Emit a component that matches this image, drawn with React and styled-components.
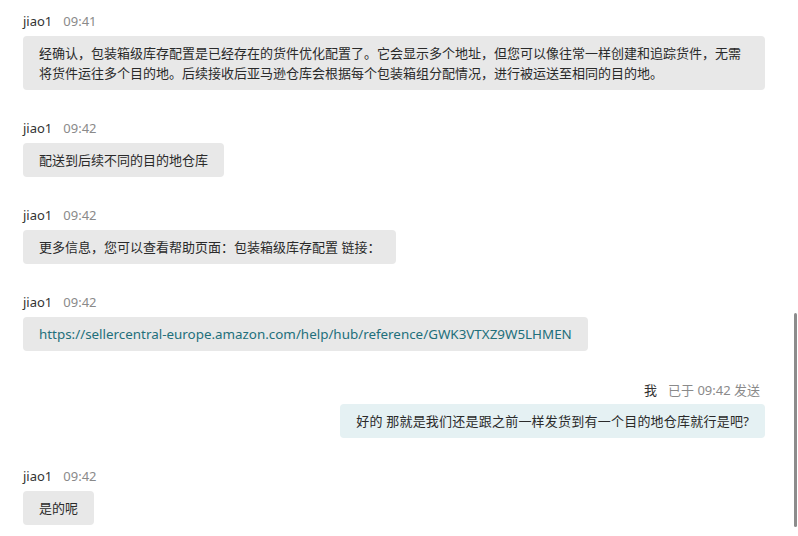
import React from "react";
import styled, { createGlobalStyle } from "styled-components";

const GlobalStyle = createGlobalStyle`
  html, body {
    margin: 0;
    padding: 0;
    background: #fff;
  }
  body {
    font-family: "Noto Sans", "Noto Sans CJK SC", sans-serif;
    color: #222;
  }
`;

const messages = [
  {
    from: "jiao1",
    time: "09:41",
    text: "经确认，包装箱级库存配置是已经存在的货件优化配置了。它会显示多个地址，但您可以像往常一样创建和追踪货件，无需\n将货件运往多个目的地。后续接收后亚马逊仓库会根据每个包装箱组分配情况，进行被运送至相同的目的地。",
    wide: true,
  },
  { from: "jiao1", time: "09:42", text: "配送到后续不同的目的地仓库" },
  { from: "jiao1", time: "09:42", text: "更多信息，您可以查看帮助页面：包装箱级库存配置 链接：" },
  {
    from: "jiao1",
    time: "09:42",
    link: "https://sellercentral-europe.amazon.com/help/hub/reference/GWK3VTXZ9W5LHMEN",
  },
  {
    mine: true,
    time: "09:42",
    text: "好的 那就是我们还是跟之前一样发货到有一个目的地仓库就行是吧?",
  },
  { from: "jiao1", time: "09:42", text: "是的呢" },
];

const App = () => {
  return (
    <>
      <GlobalStyle />
      <Page>
        <Thread>
          {messages.map((m, i) => (
            <Message key={i} $mine={m.mine}>
              {m.mine ? (
                <Header $mine>
                  <span className="me">我</span>
                  <span className="time">已于 09:42 发送</span>
                </Header>
              ) : (
                <Header>
                  <span className="name">{m.from}</span>
                  <span className="time">{m.time}</span>
                </Header>
              )}
              <Bubble $mine={m.mine} $wide={m.wide}>
                {m.link ? <Link href="#">{m.link}</Link> : m.text}
              </Bubble>
            </Message>
          ))}
        </Thread>
        <ScrollThumb />
      </Page>
    </>
  );
};

export default App;

const Page = styled.div`
  position: relative;
  width: 798px;
  height: 536px;
  overflow: hidden;
`;

const Thread = styled.div`
  display: flex;
  flex-direction: column;
  gap: 28px;
  padding: 11px 33px 0 23px;
`;

const Message = styled.div`
  display: flex;
  flex-direction: column;
  align-items: ${(p) => (p.$mine ? "flex-end" : "flex-start")};
`;

const Header = styled.div`
  display: flex;
  align-items: center;
  gap: 11px;
  height: 20px;
  margin-bottom: 5px;
  padding-right: ${(p) => (p.$mine ? "5px" : "0")};
  font-size: 13px;
  .name,
  .me {
    color: #333;
  }
  .time {
    color: #8a8a8a;
  }
`;

const Bubble = styled.div`
  align-self: ${(p) => (p.$wide ? "stretch" : "auto")};
  background: ${(p) => (p.$mine ? "#e5f1f3" : "#e8e8e8")};
  border-radius: 4px;
  padding: 7px 16px;
  font-size: 13px;
  line-height: 20px;
  letter-spacing: ${(p) => (p.$mine ? "0.22px" : "0")};
  color: #2a2a2a;
  white-space: pre-line;
`;

const Link = styled.a`
  color: #226f7b;
  font-size: 13.4px;
  text-decoration: none;
`;

const ScrollThumb = styled.div`
  position: absolute;
  right: 1px;
  top: 313px;
  width: 3px;
  height: 214px;
  border-radius: 2px;
  background: #8c8c8c;
`;
